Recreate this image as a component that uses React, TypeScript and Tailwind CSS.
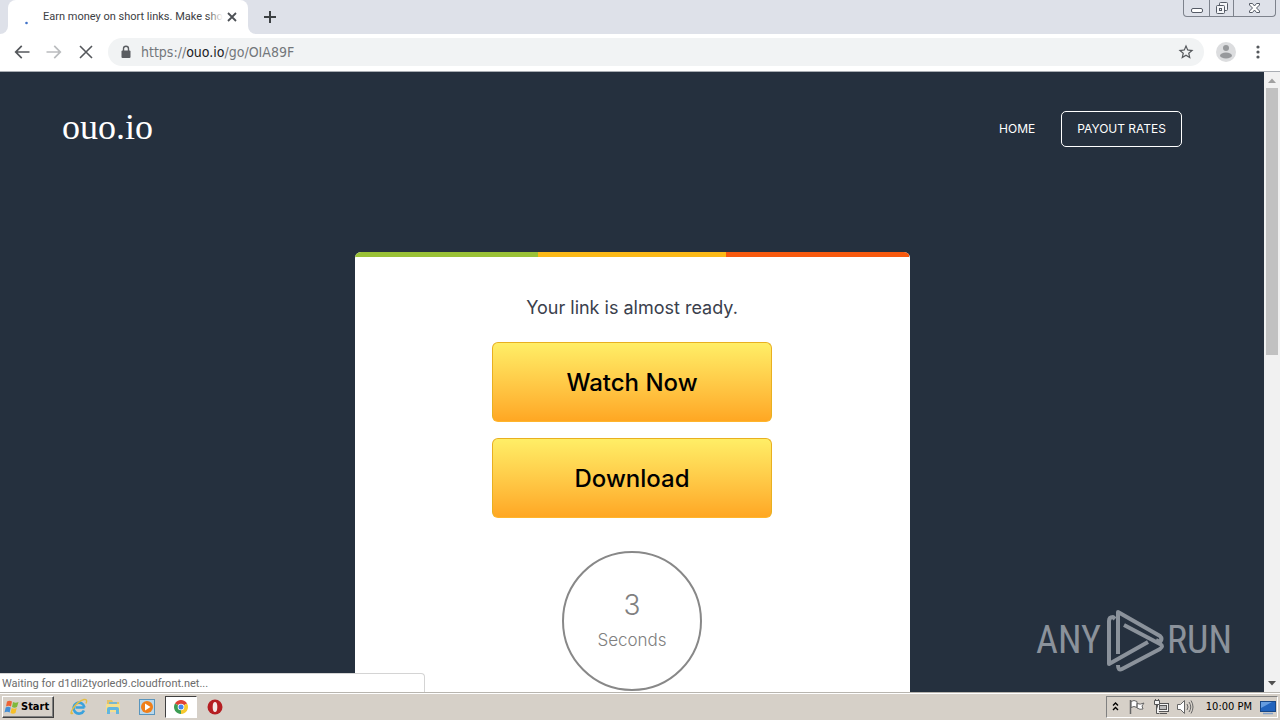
import type { ReactNode } from "react";

function WindowControls() {
  const btn = "flex h-full items-center justify-center";
  return (
    <div className="mr-1 flex h-[17px] rounded-b border border-t-0 border-[#7d828c] text-[#555b66]">
      <button aria-label="Minimize" className={`${btn} w-[25px]`}>
        <svg width="14" height="16" viewBox="0 0 14 16" fill="#fff" stroke="currentColor">
          <rect x="1.5" y="8.500" width="11" height="4" rx="1.500" />
        </svg>
      </button>
      <button aria-label="Restore" className={`${btn} w-[25px] border-x border-[#7d828c]`}>
        <svg width="14" height="16" viewBox="0 0 14 16" fill="#f4f5f8" stroke="currentColor">
          <rect x="4.500" y="2.500" width="8" height="8" rx="1" />
          <rect x="1.500" y="5.500" width="8" height="8" rx="1" />
          <rect x="4.500" y="8.500" width="2" height="2" />
        </svg>
      </button>
      <button aria-label="Close" className={`${btn} w-[41px]`}>
        <svg width="13" height="16" viewBox="0 0 13 16" fill="#fff" stroke="currentColor">
          <path d="M1.500 3.500h3l2 2.500 2-2.500h3v1.500L8.500 8l3 3v1.500h-3l-2-2.500-2 2.500h-3V11l3-3-3-3z" />
        </svg>
      </button>
    </div>
  );
}

function TabStrip() {
  return (
    <div className="flex h-[34px] shrink-0 items-start bg-[#dee1e9]">
      <div className="flex h-full w-2 shrink-0 bg-white">
        <div className="w-full rounded-br-lg bg-[#dee1e9]" />
      </div>
      <div className="flex h-full w-60 shrink-0 items-center rounded-t-lg bg-white pr-2 pl-4">
        <svg width="12" height="12" viewBox="0 0 12 12" className="mt-3 mr-[7px] shrink-0">
          <circle cx="2.500" cy="6" r="1.300" fill="#4273c8" />
        </svg>
        <span className="relative mr-1 w-[180px] shrink-0 font-['Roboto',sans-serif] text-[11px] whitespace-nowrap text-[#3c4043]">
          Earn money on short links. Make sho
          <span className="absolute inset-y-0 right-0 w-4 bg-linear-to-r from-transparent to-white" />
        </span>
        <button aria-label="Close tab">
          <svg width="10" height="10" viewBox="0 0 10 10" stroke="#4c5055" strokeWidth="1.800">
            <path d="M1 1l8 8M9 1L1 9" />
          </svg>
        </button>
      </div>
      <div className="flex h-full w-2 shrink-0 bg-white">
        <div className="w-full rounded-bl-lg bg-[#dee1e9]" />
      </div>
      <button aria-label="New tab" className="mt-[11px] ml-2">
        <svg width="12" height="12" viewBox="0 0 12 12" stroke="#3c4043" strokeWidth="2">
          <path d="M6 0v12M0 6h12" />
        </svg>
      </button>
      <div className="flex-1" />
      <WindowControls />
    </div>
  );
}

function Toolbar() {
  return (
    <div className="flex h-[38px] shrink-0 items-center border-b border-[#a9adb3] bg-white pb-px pl-3">
      <div className="flex w-24 shrink-0 gap-3">
        <button aria-label="Back">
          <svg width="20" height="20" viewBox="0 0 24 24" fill="#55585c">
            <path d="M21 11H6.830l5.590-5.590L11 4l-8 8 8 8 1.410-1.410L6.830 13H21z" />
          </svg>
        </button>
        <button aria-label="Forward">
          <svg width="20" height="20" viewBox="0 0 24 24" fill="#babcbe">
            <path d="M3 11h14.170l-5.590-5.590L13 4l8 8-8 8-1.410-1.410L17.170 13H3z" />
          </svg>
        </button>
        <button aria-label="Stop">
          <svg width="20" height="20" viewBox="0 0 20 20" stroke="#55585c" strokeWidth="1.600">
            <path d="M4 4l12 12M16 4L4 16" />
          </svg>
        </button>
      </div>
      <div className="flex h-7 flex-1 items-center rounded-full bg-[#f1f3f4] px-3">
        <svg width="12" height="14" viewBox="0 0 12 14" className="shrink-0">
          <path d="M3.500 6V3.800a2.500 2.500 0 0 1 5 0V6" fill="none" stroke="#5a5d61" strokeWidth="1.400" />
          <rect x="1.500" y="5.500" width="9" height="7.500" rx="1" fill="#5a5d61" />
        </svg>
        <p className="ml-[9px] flex-1 font-['DejaVu_Sans_Condensed','Noto_Sans',sans-serif] text-sm text-[#73777b]">
          https://<span className="text-[#202124]">ouo.io</span>/go/OIA89F
        </p>
        <button aria-label="Bookmark this page" className="-mr-[3px]">
          <svg width="18" height="18" viewBox="0 0 24 24" fill="#55585c">
            <path d="M22 9.240l-7.190-.62L12 2 9.190 8.630 2 9.240l5.460 4.730L5.820 21 12 17.270 18.180 21l-1.630-7.030L22 9.240zM12 15.400l-3.760 2.270 1-4.280-3.320-2.880 4.380-.38L12 6.100l1.710 4.040 4.380.38-3.320 2.880 1 4.280L12 15.400z" />
          </svg>
        </button>
      </div>
      <button aria-label="Profile" className="ml-3">
        <svg width="20" height="20" viewBox="0 0 20 20">
          <circle cx="10" cy="10" r="10" fill="#dcdddf" />
          <circle cx="10" cy="6" r="3" fill="#97999c" />
          <ellipse cx="10" cy="13.500" rx="6" ry="3" fill="#97999c" />
        </svg>
      </button>
      <button aria-label="Menu" className="mr-3 ml-3">
        <svg width="20" height="20" viewBox="0 0 20 20" fill="#55585c">
          <circle cx="10" cy="5" r="1.600" />
          <circle cx="10" cy="10" r="1.600" />
          <circle cx="10" cy="15" r="1.600" />
        </svg>
      </button>
    </div>
  );
}

function BigButton({ children }: { children: ReactNode }) {
  return (
    <button className="h-20 w-[280px] rounded-md border border-[#e8b020] border-b-[#ffb52c] bg-linear-to-b from-[#ffee66] to-[#ffa722] pt-[2px] text-2xl font-medium text-black">
      {children}
    </button>
  );
}

function Watermark() {
  const word = "font-['Roboto_Condensed','Open_Sans_Condensed','Liberation_Sans_Narrow',sans-serif] text-[38px] leading-none";
  return (
    <div className="absolute right-8 bottom-5 flex items-center gap-[3px] text-[#8b929b]">
      <span className={word}>ANY</span>
      <svg width="60" height="64" viewBox="0 0 60 64" fill="none" stroke="currentColor" strokeWidth="4" strokeLinejoin="round">
        <path d="M14 46V4L56 28q3 3 0 6l-4-2" />
        <path d="M20 17l36 19q4 2 0 5L18 61q-4 2-4-4" />
        <path d="M11 11l-2-2q-4 0-4 4v43l39-22" />
      </svg>
      <span className={word}>RUN</span>
    </div>
  );
}

function Page() {
  return (
    <main className="relative min-w-0 flex-1 overflow-hidden bg-[#25303e] font-['Inter',sans-serif]">
      <header className="flex items-start justify-between pt-[39px] pr-[82px] pl-[62px] text-white">
        <a href="#" className="font-['Liberation_Serif',serif] text-4xl leading-8">ouo.io</a>
        <nav className="flex items-center gap-[26px] text-xs">
          <a href="#">HOME</a>
          <a href="#" className="flex h-9 items-center rounded-[5px] border border-white px-[15px]">PAYOUT RATES</a>
        </nav>
      </header>
      <section className="mx-auto mt-[105px] flex w-[555px] flex-col items-center overflow-hidden rounded-t-md bg-white pb-16">
        <div className="flex h-[5px] w-full">
          <div className="w-[33%] bg-[#9ac136]" />
          <div className="w-[34%] bg-[#fbb917]" />
          <div className="w-[33%] bg-[#f7590e]" />
        </div>
        <h1 className="mt-9 mb-5 text-lg leading-[29px] text-[#3a404c]">Your link is almost ready.</h1>
        <div className="flex flex-col gap-4">
          <BigButton>Watch Now</BigButton>
          <BigButton>Download</BigButton>
        </div>
        <div className="mt-[33px] flex size-[140px] shrink-0 flex-col items-center rounded-full border-2 border-[#888] pt-9 text-[#808080]">
          <span className="text-[28px] leading-8 font-light">3</span>
          <span className="mt-[7px] text-[17px] leading-6 font-light">Seconds</span>
        </div>
      </section>
      <Watermark />
      <div className="absolute bottom-0 left-0 h-[19px] w-[425px] rounded-tr border-t border-r border-[#d4d4d4] bg-white pl-[2px] font-['Roboto',sans-serif] text-[11px] leading-[19px] text-[#6c6c6c]">
        Waiting for d1dli2tyorled9.cloudfront.net...
      </div>
    </main>
  );
}

function Scrollbar() {
  return (
    <div className="flex w-4 shrink-0 flex-col items-center bg-[#f1f1f1]">
      <svg width="16" height="16" viewBox="0 0 16 16" className="shrink-0">
        <path d="M4 11l4-4.500L12 11z" fill="#a0a0a0" />
      </svg>
      <div className="h-[267px] w-3 shrink-0 bg-[#c1c1c1]" />
      <div className="flex-1" />
      <svg width="16" height="18" viewBox="0 0 16 18" className="shrink-0">
        <path d="M4 7l4 4.500L12 7z" fill="#505050" />
      </svg>
    </div>
  );
}

function Taskbar() {
  const slot = "flex h-[22px] w-8 items-center justify-center";
  return (
    <footer className="flex h-7 shrink-0 items-center border-t border-[#b8b5af] bg-[#d6d0c8] px-[2px] font-['DejaVu_Sans_Condensed','Noto_Sans',sans-serif] text-[11px] text-black shadow-[inset_0_1px_0_#fff]">
      <button className="flex h-[22px] w-[52px] items-center gap-px border border-white border-r-[#404040] border-b-[#404040] pt-px pl-px text-[11px] font-bold shadow-[inset_-1px_-1px_0_#808080]">
        <svg width="16" height="16" viewBox="0 0 16 16">
          <path d="M3 2.500Q5.500 1 8 2.500L7 7.500Q4.500 6 2 7.500z" fill="#ed6335" />
          <path d="M9 3q2.500 1.500 5.500 0l-1.500 5q-2.500 1.500-5 0z" fill="#7fb93c" />
          <path d="M1.700 8.500Q4 7 6.700 8.500l-1 5Q3 12 .5 13.500z" fill="#438ed5" />
          <path d="M7.700 9q2.500 1.500 5 0l-1.200 5q-2.500 1.500-5 0z" fill="#f6bf28" />
        </svg>
        Start
      </button>
      <div className="ml-[9px] flex gap-[2px]">
        <button aria-label="Internet Explorer" className={slot}>
          <svg width="18" height="18" viewBox="0 0 18 18" fill="none">
            <path d="M14.500 9.500H5.500M14 12.500a5.500 5.500 0 1 1 .5-3" stroke="#3aa2dd" strokeWidth="2.600" />
            <path d="M3 15Q-1 17 3 10.500 8 3 14 1.500q4-.5 2 4" stroke="#e4bd42" strokeWidth="1.400" />
          </svg>
        </button>
        <button aria-label="File Explorer" className={slot}>
          <svg width="18" height="18" viewBox="0 0 18 18">
            <path d="M3 2h5l1 2h6v9H3z" fill="#e4c266" />
            <path d="M5 4h8v4H5z" fill="#79b7cd" />
            <path d="M2 6h14v8H2z" fill="#f4df8e" />
            <path d="M3 16v-5q0-2 2-2h8q2 0 2 2v5h-3v-4H6v4z" fill="#62b6df" />
          </svg>
        </button>
        <button aria-label="Media Player" className={slot}>
          <svg width="18" height="18" viewBox="0 0 18 18">
            <rect x="1.500" y="1.500" width="15" height="15" fill="#b9d8ec" stroke="#5995bd" />
            <circle cx="9" cy="9" r="6" fill="#f07f19" />
            <path d="M7 5.500v7L12.500 9z" fill="#fff" />
          </svg>
        </button>
        <button aria-label="Chrome" className={`${slot} border border-[#404040] border-r-white border-b-white bg-white`}>
          <svg width="14" height="14" viewBox="0 0 14 14">
            <path d="M7 7L.94 3.500A7 7 0 0 1 13.060 3.500z" fill="#df4235" />
            <path d="M7 7l6.060-3.500A7 7 0 0 1 7 14z" fill="#f7c92d" />
            <path d="M7 7v7A7 7 0 0 1 .94 3.500z" fill="#3c9d53" />
            <circle cx="7" cy="7" r="3.300" fill="#fff" />
            <circle cx="7" cy="7" r="2.500" fill="#4385ee" />
          </svg>
        </button>
        <button aria-label="Opera" className={slot}>
          <svg width="16" height="16" viewBox="0 0 16 16">
            <circle cx="8" cy="8" r="7.500" fill="#b51e22" />
            <path d="M2 4a7.500 7.500 0 0 0 12 8 7.500 7.500 0 0 1-12-8" fill="#7c1014" />
            <ellipse cx="8" cy="8" rx="2.300" ry="5" fill="#f4e9e7" />
          </svg>
        </button>
      </div>
      <div className="flex-1" />
      <div className="flex h-[22px] items-center border border-[#808080] border-r-white border-b-white pr-px pl-1">
        <svg width="9" height="12" viewBox="0 0 9 12" fill="none" stroke="#000" strokeWidth="1.400">
          <path d="M2 4.500L4.500 2 7 4.500M2 9l2.500-2.500L7 9" />
        </svg>
        <svg width="18" height="18" viewBox="0 0 18 18" fill="#fff" stroke="#666" className="ml-2">
          <path d="M3 3.500q3-2 6 0v6q-3-2-6 0zM9 5.500q3 1.500 7-.5l-2 3 1 3q-3 1-6-1z" />
          <path d="M2.500 2v14" strokeWidth="1.500" />
        </svg>
        <svg width="18" height="18" viewBox="0 0 18 18" fill="#f4f4f4" stroke="#555" className="ml-[6px]">
          <rect x="5.500" y="5.500" width="11" height="8" />
          <rect x="7.500" y="7.500" width="7" height="4" fill="#bbb" />
          <path d="M8 15.500h7M2.500 2.500h5v4h-5zM3.500 1v1.500M6.500 1v1.500M4.500 6.500v9h3" />
        </svg>
        <svg width="18" height="18" viewBox="0 0 18 18" fill="#fff" stroke="#666" className="ml-[6px]">
          <path d="M1.500 6.500h3l4-4v13l-4-4h-3z" />
          <path d="M11 6q2 3 0 6M13 4q3.500 5 0 10M15 2.500q4 6.500 0 13" fill="none" />
        </svg>
        <time className="mt-px ml-3 whitespace-nowrap">10:00 PM</time>
        <svg width="16" height="16" viewBox="0 0 16 16" className="ml-2">
          <rect x=".5" y="2.500" width="15" height="10" fill="#2163bd" stroke="#184786" />
          <path d="M1 3h11L1 9z" fill="#659cdf" />
          <path d="M3 14.500h10" stroke="#83a1c8" strokeWidth="1.500" />
        </svg>
      </div>
    </footer>
  );
}

export default function App() {
  return (
    <div className="flex h-screen flex-col overflow-hidden">
      <TabStrip />
      <Toolbar />
      <div className="flex min-h-0 flex-1">
        <Page />
        <Scrollbar />
      </div>
      <Taskbar />
    </div>
  );
}
